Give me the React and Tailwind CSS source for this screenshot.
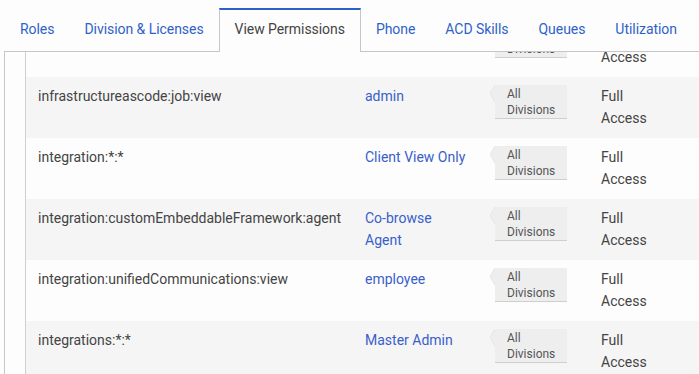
import React from "react";

const tabs = ["Roles", "Division & Licenses", "View Permissions", "Phone", "ACD Skills", "Queues", "Utilization"];

const rows = [
  { perm: "", role: [""], stripe: false },
  { perm: "infrastructureascode:job:view", role: ["admin"], stripe: true },
  { perm: "integration:*:*", role: ["Client View Only"], stripe: false },
  { perm: "integration:customEmbeddableFramework:agent", role: ["Co-browse", "Agent"], stripe: true },
  { perm: "integration:unifiedCommunications:view", role: ["employee"], stripe: false },
  { perm: "integrations:*:*", role: ["Master Admin"], stripe: true },
];

function Badge() {
  return (
    <div className="flex items-start">
      <svg width="5" height="17" viewBox="0 0 5 17" className="block shrink-0">
        <polygon points="5,0 0,8.5 5,17" fill="#eeeeee" />
        <polyline points="5,0 0,8.5 5,17" fill="none" stroke="#e2e2e2" strokeWidth="0.8" />
      </svg>
      <div className="w-[72px] bg-[#eeeeee] border-b border-[#cfcfcf] pl-3 pt-px text-[12px] leading-[16px] text-[#555]">
        <div>All</div>
        <div>Divisions</div>
      </div>
    </div>
  );
}

export default function App() {
  return (
    <div
      className="w-[699px] h-[374px] overflow-hidden bg-[#fdfdfd]"
      style={{ fontFamily: "Roboto, 'Liberation Sans', sans-serif" }}
    >
      <div className="ml-1">
        <div className="flex items-end h-[52px] border-b border-[#c6c6c6] pl-px tracking-[-0.05px]">
          {tabs.map((t) => {
            const active = t === "View Permissions";
            return active ? (
              <div
                key={t}
                className="relative z-10 -mb-px h-[44px] flex items-center pb-[3px] px-[15px] bg-[#fdfdfd] border-x border-t-2 border-x-[#c6c6c6] border-t-[#2a62c9] text-[14px] text-[#444]"
              >
                {t}
              </div>
            ) : (
              <div key={t} className="h-[43px] flex items-center pb-[1px] px-[15px] text-[14px] text-[#2f62c8]">
                {t}
              </div>
            );
          })}
        </div>
        <div className="h-[322px] border-l border-[#c6c6c6] pl-5 overflow-hidden">
          <div className="h-full border-l border-[#cfcfcf] overflow-hidden">
            <div className="-mt-[36px]">
              {rows.map((r, i) => (
                <div
                  key={i}
                  className={
                    "grid grid-cols-[327px_125px_111px_1fr] h-[61px] pt-2 text-[14px] leading-[22px] " +
                    (r.stripe ? "bg-[#f5f5f5]" : "bg-[#fdfdfd]")
                  }
                >
                  <div className="pl-3 text-[#444] whitespace-nowrap">{r.perm}</div>
                  <div className="pl-3 text-[#3a5fc9]">
                    {r.role.map((l, j) => (
                      <div key={j}>{l}</div>
                    ))}
                  </div>
                  <div className="pl-3">
                    <Badge />
                  </div>
                  <div className="pl-3 text-[#444]">
                    <div>Full</div>
                    <div>Access</div>
                  </div>
                </div>
              ))}
            </div>
          </div>
        </div>
      </div>
    </div>
  );
}
